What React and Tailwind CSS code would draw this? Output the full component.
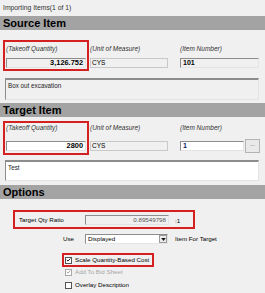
import React from "react";

const sunken =
  "border-t border-l border-b border-r border-t-[#8c8c8c] border-l-[#8c8c8c] border-b-[#e4e4e4] border-r-[#e4e4e4]";
const flat = "border border-[#c9c9c9]";

function Header({ children, className = "" }) {
  return (
    <div
      className={`h-[14px] bg-[#a3a3a3] px-[3px] text-[11px] font-bold leading-[14px] text-black ${className}`}
    >
      {children}
    </div>
  );
}

function Label({ children }) {
  return <div className="text-[6.5px] italic leading-none text-[#333]">{children}</div>;
}

function Check({ checked, disabled }) {
  return (
    <span
      className={`flex h-[7px] w-[7px] shrink-0 items-center justify-center border bg-white ${
        disabled ? "border-[#a8a8a8] bg-[#f4f4f4]" : "border-[#555]"
      }`}
    >
      {checked && (
        <svg viewBox="0 0 7 7" className="h-[6px] w-[6px]">
          <path
            d="M1 3.3 L2.8 5 L6 1.5"
            fill="none"
            stroke={disabled ? "#a0a0a0" : "#111"}
            strokeWidth="1.3"
          />
        </svg>
      )}
    </span>
  );
}

export default function App() {
  return (
    <div className="h-[293px] w-[265px] overflow-hidden bg-[#f0f0f0] font-['Liberation_Sans',Arial,sans-serif] text-black">
      <div className="flex h-[16px] items-center pl-[3px] text-[6.8px] text-[#333]">
        Importing Items(1 of 1)
      </div>

      <Header>Source Item</Header>
      <div className="pt-[10px]">
        <div className="flex items-start">
          <div className="ml-[3px] h-[31px] w-[86px] border-2 border-[#d42020]">
            <div className="flex h-[15px] items-center pl-[1px]">
              <Label>(Takeoff Quantity)</Label>
            </div>
            <div
              className={`mt-[1px] ml-[1px] flex h-[10px] w-[80px] items-center justify-end bg-[#f0f0f0] pr-[2px] text-[7.4px] font-bold ${sunken}`}
            >
              3,126.752
            </div>
          </div>
          <div className="ml-[1px] w-[78px] pt-[2px]">
            <div className="flex h-[15px] items-center">
              <Label>(Unit of Measure)</Label>
            </div>
            <div className={`mt-[1px] flex h-[10px] items-center bg-[#f0f0f0] pl-[1px] text-[6.5px] ${flat}`}>
              CYS
            </div>
          </div>
          <div className="ml-[12px] w-[79px] pt-[2px]">
            <div className="flex h-[15px] items-center">
              <Label>(Item Number)</Label>
            </div>
            <div
              className={`mt-[1px] flex h-[10px] items-center bg-[#f0f0f0] pl-[2px] text-[7px] font-bold ${sunken}`}
            >
              101
            </div>
          </div>
        </div>
        <div
          className={`mt-[7px] ml-[5px] h-[22px] w-[254px] bg-[#f0f0f0] pl-[2px] pt-[2px] text-[6.3px] leading-tight text-[#222] border-t-2 ${sunken}`}
        >
          Box out excavation
        </div>
      </div>

      <Header className="mt-[3px] h-[13px] leading-[13px]">Target Item</Header>
      <div className="pt-[4px]">
        <div className="flex items-start">
          <div className="ml-[3px] h-[34px] w-[86px] border-2 border-[#d42020]">
            <div className="flex h-[10px] items-center pl-[1px]">
              <Label>(Takeoff Quantity)</Label>
            </div>
            <div
              className={`mt-[8px] ml-[1px] flex h-[10px] w-[80px] items-center justify-end bg-white pr-[2px] text-[7.4px] font-bold ${sunken}`}
            >
              2800
            </div>
          </div>
          <div className="ml-[1px] w-[78px] pt-[2px]">
            <div className="flex h-[10px] items-center">
              <Label>(Unit of Measure)</Label>
            </div>
            <div className={`mt-[8px] flex h-[10px] items-center bg-[#f0f0f0] pl-[1px] text-[6.5px] ${flat}`}>
              CYS
            </div>
          </div>
          <div className="ml-[12px] w-[80px] pt-[2px]">
            <div className="flex h-[10px] items-center">
              <Label>(Item Number)</Label>
            </div>
            <div className="mt-[6px] flex items-center">
              <div
                className={`flex h-[10px] w-[64px] items-center bg-white pl-[2px] text-[7px] font-bold text-[#0a1a5a] ${sunken}`}
              >
                1
              </div>
              <div className="ml-[1px] flex h-[14px] w-[15px] items-center justify-center border border-[#b4b4b4] bg-[#e9e9e9] pb-[3px] text-[6px] text-[#444]">
                ...
              </div>
            </div>
          </div>
        </div>
        <div
          className={`mt-[5px] ml-[5px] h-[21px] w-[254px] bg-white pl-[2px] pt-[2px] text-[6.3px] leading-tight text-[#222] border-t-2 ${sunken}`}
        >
          Test
        </div>
      </div>

      <Header className="mt-[4px] h-[13px] leading-[13px]">Options</Header>
      <div className="pt-[11px] text-[6.2px]">
        <div className="ml-[13px] flex h-[19px] w-[182px] items-center border-2 border-[#d42020] pl-[4px]">
          <span className="w-[66px]">Target Qty Ratio</span>
          <div
            className={`flex h-[10px] w-[84px] items-center justify-end bg-[#f0f0f0] pr-[2px] text-[#555] ${sunken}`}
          >
            0.89549798
          </div>
          <span className="ml-[6px] mt-[2px]">:1</span>
        </div>

        <div className="mt-[5px] flex h-[10px] items-center pl-[63px]">
          <span className="w-[22px]">Use</span>
          <div className={`flex h-[10px] w-[83px] items-center bg-white ${sunken}`}>
            <span className="flex-1 pl-[2px]">Displayed</span>
            <span className="flex h-[8px] w-[8px] items-center justify-center border border-[#9a9a9a] bg-[#ececec]">
              <svg viewBox="0 0 6 4" className="h-[3px] w-[5px]">
                <path d="M0 0 L6 0 L3 4 Z" fill="#111" />
              </svg>
            </span>
          </div>
          <span className="ml-[7px]">Item For Target</span>
        </div>

        <div className="mt-[9px] ml-[62px] flex h-[14px] w-[92px] items-center gap-[3px] border-2 border-[#d42020] pl-[1px]">
          <Check checked />
          <span className="whitespace-nowrap">Scale Quantity-Based Cost</span>
        </div>

        <div className="ml-[65px] flex h-[10px] items-center gap-[3px] text-[#a6a6a6]">
          <Check checked disabled />
          <span>Add To Bid Sheet</span>
        </div>

        <div className="mt-[3px] ml-[65px] flex h-[10px] items-center gap-[3px]">
          <Check />
          <span>Overlay Description</span>
        </div>
      </div>
    </div>
  );
}
